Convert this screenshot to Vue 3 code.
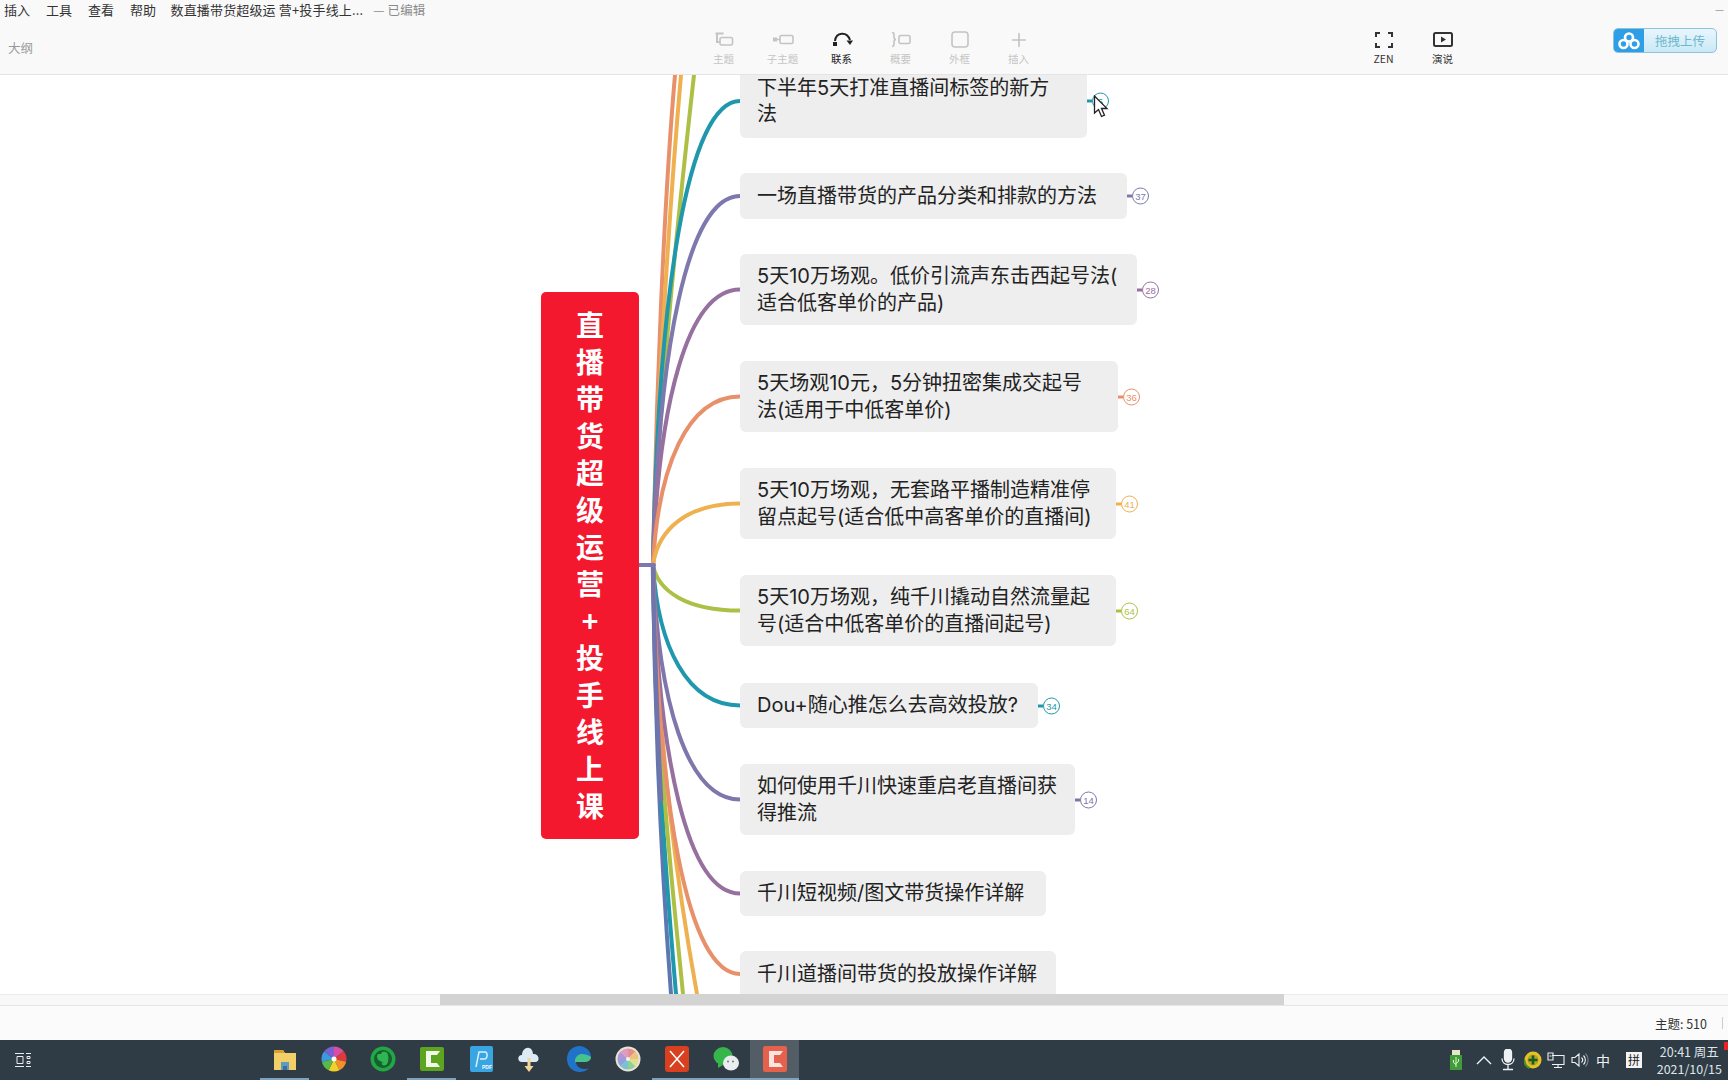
<script setup>
const menus = ['插入', '工具', '查看', '帮助']

const tools = [
  { label: '主题', id: 'topic' },
  { label: '子主题', id: 'sub' },
  { label: '联系', id: 'rel', on: true },
  { label: '概要', id: 'sum' },
  { label: '外框', id: 'box' },
  { label: '插入', id: 'add' },
]

const colors = {
  teal: '#1f97ad',
  blue: '#7d78ae',
  purple: '#96709f',
  coral: '#e8906a',
  yellow: '#efb04f',
  olive: '#aebf45',
  slate: '#7f76ab',
}

const nodes = [
  { lines: ['下半年5天打准直播间标签的新方', '法'], top: 64, w: 347, h: 74, color: colors.teal, badge: '6' },
  { lines: ['一场直播带货的产品分类和排款的方法'], top: 173, w: 387, h: 46, color: colors.blue, badge: '37' },
  { lines: ['5天10万场观。低价引流声东击西起号法(', '适合低客单价的产品)'], top: 254, w: 397, h: 71, color: colors.purple, badge: '28' },
  { lines: ['5天场观10元，5分钟扭密集成交起号', '法(适用于中低客单价)'], top: 361, w: 378, h: 71, color: colors.coral, badge: '36' },
  { lines: ['5天10万场观，无套路平播制造精准停', '留点起号(适合低中高客单价的直播间)'], top: 468, w: 376, h: 71, color: colors.yellow, badge: '41' },
  { lines: ['5天10万场观，纯千川撬动自然流量起', '号(适合中低客单价的直播间起号)'], top: 575, w: 376, h: 71, color: colors.olive, badge: '64' },
  { lines: ['Dou+随心推怎么去高效投放?'], top: 683, w: 298, h: 45, color: colors.teal, badge: '34' },
  { lines: ['如何使用千川快速重启老直播间获', '得推流'], top: 764, w: 335, h: 71, color: colors.slate, badge: '14' },
  { lines: ['千川短视频/图文带货操作详解'], top: 871, w: 306, h: 45, color: colors.purple },
  { lines: ['千川道播间带货的投放操作详解'], top: 951, w: 316, h: 60, color: colors.coral },
]

const NODE_X = 740
const JX = 653
const JY = 565

function curve(n) {
  const y = n.top + (n.top === 951 ? 23 : n.h / 2)
  const up = y < JY
  const d = Math.abs(y - JY)
  const cy1 = JY + (up ? -1 : 1) * d * 0.58
  return `M${JX} ${JY} C ${JX + 5} ${cy1}, ${JX + 34} ${y}, ${NODE_X} ${y}`
}

const branches = nodes.map((n) => ({ d: curve(n), color: n.color }))

const extra = [
  { d: `M${JX} ${JY} C 656 400, 664 200, 675 75`, color: '#e8906a' },
  { d: `M${JX} ${JY} C 657 400, 670 200, 681 75`, color: '#efb04f' },
  { d: `M${JX} ${JY} C 658 400, 680 200, 694 75`, color: '#aebf45' },
  { d: `M${JX} ${JY} C 655 760, 664 900, 671 994`, color: '#5d78b0' },
  { d: `M${JX} ${JY} C 656 760, 668 900, 676 994`, color: '#1f97ad' },
  { d: `M${JX} ${JY} C 657 760, 674 900, 683 994`, color: '#aebf45' },
  { d: `M${JX} ${JY} C 658 760, 680 900, 697 994`, color: '#efb04f' },
]

const rootChars = ['直', '播', '带', '货', '超', '级', '运', '营', '+', '投', '手', '线', '上', '课']

const dock = ['folder', 'pin', 'ever', 'cam', 'pdf', 'cloud', 'edge', 'wheel', 'x', 'wx', 'cam2']
const underlined = new Set(['folder', 'cam', 'x', 'wx', 'cam2'])

function wedges(cx, cy, r, palette) {
  const step = (Math.PI * 2) / palette.length
  return palette.map((fill, i) => {
    const a = i * step - Math.PI / 2
    const b = a + step
    const x0 = (cx + r * Math.cos(a)).toFixed(2)
    const y0 = (cy + r * Math.sin(a)).toFixed(2)
    const x1 = (cx + r * Math.cos(b)).toFixed(2)
    const y1 = (cy + r * Math.sin(b)).toFixed(2)
    return { fill, d: `M${cx} ${cy}L${x0} ${y0}A${r} ${r} 0 0 1 ${x1} ${y1}Z` }
  })
}
const pinWedges = wedges(14, 14, 12.5, ['#d64fa0', '#e0393c', '#f2902a', '#f0d02c', '#58b947', '#3d9ae0', '#7c5fd0'])
const wheelWedges = wedges(14, 14, 10.5, ['#e58f8f', '#ecc27c', '#dfe08c', '#8fcf9a', '#79c3d0', '#8ea3db', '#b394d6', '#e19ac0'])
</script>

<template>
  <div class="app">
    <header class="top">
      <div class="menubar">
        <span v-for="m in menus" :key="m" class="menu">{{ m }}</span>
        <span class="doc">数直播带货超级运 营+投手线上...</span>
        <span class="edited">— 已编辑</span>
        <span class="min">—</span>
      </div>
      <div class="outline">大纲</div>
      <div class="tools">
        <div v-for="t in tools" :key="t.id" class="tool" :class="{ on: t.on }">
          <svg width="24" height="20" viewBox="0 0 24 20" fill="none" stroke="currentColor" stroke-width="1.6">
            <template v-if="t.id === 'topic'">
              <path d="M3.500 3.500h8M5 2.500v9.500h2.500" stroke-width="2" />
              <rect x="8" y="7.500" width="12.500" height="7.500" rx="1.500" />
            </template>
            <template v-else-if="t.id === 'sub'">
              <rect x="2" y="7.500" width="4" height="4" fill="currentColor" stroke="none" />
              <path d="M6 9.500h3" />
              <rect x="9" y="5.500" width="13" height="8" rx="1.500" />
            </template>
            <template v-else-if="t.id === 'rel'">
              <rect x="3" y="12" width="4" height="4" fill="currentColor" stroke="none" />
              <path d="M5 11C6 2 17 1 20 10" stroke-width="2" />
              <path d="M16.500 10.500h6.500L20 15z" fill="currentColor" stroke="none" />
            </template>
            <template v-else-if="t.id === 'sum'">
              <path d="M3 2.500c2 0 2 1 2 2.500v2c0 1.500 1 2.500 2 2.500-1 0-2 1-2 2.500v2c0 1.500 0 2.500-2 2.500" />
              <rect x="10" y="5.500" width="11" height="8" rx="1.500" />
            </template>
            <template v-else-if="t.id === 'box'">
              <rect x="4" y="2" width="16" height="15" rx="3" />
            </template>
            <template v-else>
              <path d="M12 3v14M5 10h14" />
            </template>
          </svg>
          <span class="tool-label">{{ t.label }}</span>
        </div>
      </div>
      <div class="modes">
        <div class="tool mode">
          <svg width="22" height="20" viewBox="0 0 22 20" fill="none" stroke="#333" stroke-width="2">
            <path d="M3 7V3h4M15 3h4v4M19 13v4h-4M7 17H3v-4" />
          </svg>
          <span class="tool-label">ZEN</span>
        </div>
        <div class="tool mode">
          <svg width="24" height="20" viewBox="0 0 24 20" fill="none">
            <rect x="3" y="3" width="18" height="13" rx="1.500" stroke="#333" stroke-width="2" />
            <path d="M10 6.500l5 3-5 3z" fill="#333" />
          </svg>
          <span class="tool-label">演说</span>
        </div>
      </div>
      <div class="upload">
        <span class="up-icon">
          <svg width="24" height="20" viewBox="0 0 24 20" fill="none" stroke="#fff" stroke-width="2.600">
            <circle cx="12" cy="6.500" r="4" />
            <circle cx="6.500" cy="13" r="4" />
            <circle cx="17.500" cy="13" r="4" />
          </svg>
        </span>
        <span class="up-text">拖拽上传</span>
      </div>
    </header>

    <main class="canvas">
      <svg class="links" width="1728" height="1080" viewBox="0 0 1728 1080" fill="none" stroke-linecap="round">
        <path v-for="(b, i) in extra" :key="'e' + i" :d="b.d" :stroke="b.color" stroke-width="4" />
        <path v-for="(b, i) in branches" :key="'b' + i" :d="b.d" :stroke="b.color" stroke-width="4" />
        <path :d="`M${JX} ${JY} C 654 640, 657 720, 661 800`" stroke="#6f74ad" stroke-width="4.500" />
        <path d="M639 565H654" stroke="#7d78ae" stroke-width="4" />
      </svg>

      <div class="root">
        <span v-for="(c, i) in rootChars" :key="i">{{ c }}</span>
      </div>

      <div
        v-for="n in nodes"
        :key="n.lines[0]"
        class="node"
        :class="{ cut: n.top === 951 }"
        :style="{ top: n.top - 75 + 'px', width: n.w + 'px', height: n.h + 'px' }"
      >
        <span v-for="l in n.lines" :key="l" class="line">{{ l }}</span>
        <span v-if="n.badge" class="badge" :style="{ color: n.color }">
          <i class="stub" :style="{ background: n.color }"></i>
          <b class="ring">{{ n.badge }}</b>
        </span>
      </div>

      <svg class="cursor" width="16" height="24" viewBox="0 0 16 24">
        <path d="M1.500 1v17l4-3.500 3 7 3-1.300-3-6.700h5.500z" fill="#fff" stroke="#222" stroke-width="1.300" />
      </svg>
    </main>

    <div class="hscroll"><div class="thumb"></div></div>

    <div class="status">
      <span>主题: 510</span><i class="sep"></i>
    </div>

    <footer class="taskbar">
      <svg class="taskview" width="16" height="16" viewBox="0 0 16 16" fill="none" stroke="#e8edf0" stroke-width="1">
        <path d="M0 1.500h9M0 14.500h9M2 4.500h6v7H2zM11 1.500h5M11 14.500h5M12 4.500h3v2h-3zM12 9.500h3v2h-3z" />
      </svg>
      <div class="dock">
        <div v-for="d in dock" :key="d" class="dock-item" :class="{ u: underlined.has(d), cur: d === 'cam2' }">
          <svg width="28" height="28" viewBox="0 0 28 28">
            <template v-if="d === 'folder'">
              <path d="M3 5h9l2 3h11v17H3z" fill="#f3cf67" />
              <path d="M3 5h9l2 3H3z" fill="#d99f2f" />
              <path d="M10 17h8v8h-8z" fill="#5d9bc4" />
              <path d="M12 21h4v4h-4z" fill="#3d6f92" />
            </template>
            <template v-else-if="d === 'pin'">
              <path v-for="w in pinWedges" :key="w.fill" :d="w.d" :fill="w.fill" />
              <circle cx="14" cy="14" r="2.500" fill="#fff" />
            </template>
            <template v-else-if="d === 'ever'">
              <circle cx="14" cy="14" r="12.500" fill="#24a646" />
              <circle cx="14" cy="14" r="9" fill="#14602f" />
              <path d="M9 9h3l1-2c3-1 6 0 6 3 1 4 0 9-2 10-3 1-5 0-4-3l1 1c1 1 1-1-1-1-2-1-5-2-5-6z" fill="#2fb653" />
            </template>
            <template v-else-if="d === 'cam'">
              <rect x="2" y="2" width="24" height="24" rx="2" fill="#5ea51f" />
              <path d="M22 6H8v16h14l-3-4h-6v-8h6z" fill="#f2f8ea" />
            </template>
            <template v-else-if="d === 'pdf'">
              <rect x="3" y="1" width="23" height="26" rx="2" fill="#39a5e2" />
              <path d="M9 22l3-15h6c3 0 3 7-1 7h-4" fill="none" stroke="#d9f1ff" stroke-width="1.500" />
              <text x="15" y="24" class="pdf-t">PDF</text>
            </template>
            <template v-else-if="d === 'cloud'">
              <path d="M6 17c-5 0-5-7 0-7 0-5 4-8 7-7 2 0 4 3 4 6 6-1 8 8 2 8z" fill="#dcebf6" />
              <path d="M11.500 13h3v8h3L13 27l-4.500-6h3z" fill="#f1d79a" />
            </template>
            <template v-else-if="d === 'edge'">
              <path d="M2 14C2 6 8 1 14 1c7 0 12 5 12 11 0 4-4 5-7 5H11c0 4 4 7 8 7 2 0 3 0 5-1-3 3-6 4-9 4C7 27 2 21 2 14z" fill="#2173c9" />
              <path d="M10 15c1-5 5-6 7-6 5 0 9 3 9 3 0 4-4 5-7 5h-9z" fill="#48c28d" />
            </template>
            <template v-else-if="d === 'wheel'">
              <circle cx="14" cy="14" r="12.500" fill="#e9e2d6" />
              <path v-for="w in wheelWedges" :key="w.fill" :d="w.d" :fill="w.fill" />
              <circle cx="14" cy="14" r="2" fill="#f4f1ea" />
            </template>
            <template v-else-if="d === 'x'">
              <rect x="2" y="1" width="24" height="26" rx="3" fill="#d9401f" />
              <path d="M7 6l14 16M21 6L7 22" stroke="#fff" stroke-width="1.500" />
            </template>
            <template v-else-if="d === 'wx'">
              <ellipse cx="11" cy="11" rx="9.500" ry="9" fill="#36b54a" />
              <path d="M6 18l0 5 5-3z" fill="#36b54a" />
              <ellipse cx="19" cy="18" rx="8" ry="7.500" fill="#e9edef" />
              <circle cx="16" cy="16.500" r="1" fill="#777" />
              <circle cx="21" cy="16.500" r="1" fill="#777" />
            </template>
            <template v-else>
              <rect x="2" y="1" width="24" height="26" rx="2" fill="#e5604d" />
              <path d="M22 6H8v16h14l-3-4h-6v-8h6z" fill="#fbe4dc" />
            </template>
          </svg>
        </div>
      </div>
      <div class="tray">
        <svg class="t-usb" width="14" height="22" viewBox="0 0 14 22">
          <rect x="3" y="1" width="8" height="5" fill="#e8e4c6" />
          <rect x="1" y="6" width="12" height="15" fill="#3f9c38" />
          <path d="M7 8v10M4.500 11v2.500L7 15.500M9.500 10v2.500L7 14.500" stroke="#e8f5d8" fill="none" />
        </svg>
        <svg class="t-chev" width="16" height="10" viewBox="0 0 16 10" fill="none" stroke="#eef2f4" stroke-width="1.400">
          <path d="M1 9l7-7 7 7" />
        </svg>
        <svg class="t-mic" width="14" height="22" viewBox="0 0 14 22" fill="none" stroke="#eef2f4" stroke-width="1.300">
          <rect x="3.500" y="0" width="7" height="13" rx="3.500" fill="#eef2f4" />
          <path d="M1 9.500c0 8 12 8 12 0M7 16v4M2 20.500h10" />
        </svg>
        <svg class="t-yel" width="18" height="18" viewBox="0 0 18 18">
          <circle cx="9" cy="9" r="8.500" fill="#e6c324" />
          <path d="M0.500 9a8.500 8.500 0 0 0 5 8" stroke="#4a8f2e" stroke-width="2" fill="none" />
          <circle cx="9" cy="9" r="5.500" fill="#2f3b45" opacity=".25" />
          <path d="M9 4.500v9M4.500 9h9" stroke="#175d1c" stroke-width="2.600" />
        </svg>
        <svg class="t-net" width="18" height="16" viewBox="0 0 18 16" fill="none" stroke="#eef2f4" stroke-width="1.100">
          <path d="M5 3.500h12v9H5M1 1h5v7H1zM2.500 4h2M11 12.500v3M7 15.500h8" />
        </svg>
        <svg class="t-spk" width="18" height="16" viewBox="0 0 18 16" fill="none" stroke="#eef2f4" stroke-width="1.100">
          <path d="M1 5.500h3L8 2v12l-4-3.500H1zM10.500 5.500c1.500 1.500 1.500 3.500 0 5M12.500 3.500c2.500 2.500 2.500 6.500 0 9" />
          <path d="M14.500 1.500c3.500 3.500 3.500 9.500 0 13" stroke="#79838b" />
        </svg>
        <span class="zh">中</span>
        <span class="pin">拼</span>
        <div class="clock">
          <span>20:41 周五</span>
          <span>2021/10/15</span>
        </div>
        <i class="dot"></i>
      </div>
    </footer>
  </div>
</template>

<style>
html, body { margin: 0; padding: 0; background: #fff; }
</style>

<style scoped>
.app {
  width: 1728px;
  height: 1080px;
  display: flex;
  flex-direction: column;
  overflow: hidden;
  position: relative;
  font-family: "Noto Sans CJK SC", "Liberation Sans", sans-serif;
  color: #222;
}

.top {
  flex: 0 0 75px;
  box-sizing: border-box;
  background: #f9f9f9;
  border-bottom: 1px solid #e4e4e4;
  position: relative;
}
.menubar {
  display: flex;
  align-items: center;
  height: 19px;
  padding-left: 4px;
  font-size: 13px;
  color: #333;
}
.menu { margin-right: 16px; }
.doc { margin-left: -1.500px; color: #333; letter-spacing: 0.15px; }
.edited { margin-left: 10px; color: #8b8b8b; font-size: 12.500px; letter-spacing: 0.15px; }
.min { position: absolute; right: 4px; top: 1px; color: #999; font-size: 10px; }
.outline { position: absolute; left: 8px; top: 39px; font-size: 12.500px; color: #999; line-height: 18px; }

.tools {
  position: absolute;
  left: 694px;
  top: 30px;
  display: flex;
}
.tool {
  width: 59px;
  display: flex;
  flex-direction: column;
  align-items: center;
  color: #c4c4c4;
}
.tool.on { color: #222; }
.tool-label { font-size: 10.500px; line-height: 14px; margin-top: 2px; white-space: nowrap; }

.modes {
  position: absolute;
  left: 1354px;
  top: 30px;
  display: flex;
}
.mode { color: #333; }

.upload {
  position: absolute;
  left: 1613px;
  top: 28px;
  width: 104px;
  height: 25px;
  box-sizing: border-box;
  border-radius: 5px;
  border: 1px solid #8fc2d9;
  background: linear-gradient(#e9f6fc, #c9e9f6);
  display: flex;
  overflow: hidden;
}
.up-icon {
  flex: 0 0 30px;
  background: #2e9fe6;
  display: flex;
  align-items: center;
  justify-content: center;
}
.up-text {
  flex: 1;
  text-align: center;
  font-size: 12.500px;
  line-height: 23px;
  color: #6fb7cf;
}

.canvas {
  flex: 0 0 919px;
  position: relative;
  overflow: hidden;
  background: #fff;
}
.links { position: absolute; left: 0; top: -75px; }

.root {
  position: absolute;
  left: 541px;
  top: 217px;
  width: 98px;
  height: 547px;
  box-sizing: border-box;
  padding-top: 14px;
  background: #f4182f;
  border-radius: 5px;
  display: flex;
  flex-direction: column;
  align-items: center;
  color: #fff;
  font-size: 28px;
  font-weight: 700;
  line-height: 37px;
}

.node {
  position: absolute;
  left: 740px;
  box-sizing: border-box;
  background: #eeeeee;
  border-radius: 6px;
  padding: 0 17px;
  display: flex;
  flex-direction: column;
  justify-content: center;
  font-family: "Inter", "Noto Sans CJK SC", sans-serif;
  font-size: 20px;
  line-height: 26.500px;
  color: #222;
  white-space: nowrap;
}
.node.cut { justify-content: flex-start; padding-top: 10px; }
.line { display: block; }
.badge {
  position: absolute;
  left: 100%;
  top: 50%;
  transform: translateY(-50%);
  display: flex;
  align-items: center;
}
.stub { width: 5px; height: 3px; display: block; }
.ring {
  box-sizing: border-box;
  width: 17px;
  height: 17px;
  border: 1px solid currentColor;
  border-radius: 50%;
  background: #fff;
  font-weight: 400;
  font-style: normal;
  font-size: 9.500px;
  line-height: 15px;
  text-align: center;
  font-family: "Liberation Sans", sans-serif;
}
.cursor { position: absolute; left: 1093px; top: 20px; }

.hscroll {
  flex: 0 0 11px;
  background: #f8f8f8;
  border-top: 1px solid #ececec;
  box-sizing: border-box;
  position: relative;
}
.thumb {
  position: absolute;
  left: 440px;
  top: -1px;
  width: 844px;
  height: 11px;
  background: #d3d3d3;
}

.status {
  flex: 0 0 35px;
  box-sizing: border-box;
  border-top: 1px solid #e6e6e6;
  background: #fbfbfb;
  display: flex;
  align-items: center;
  justify-content: flex-end;
  font-size: 12.500px;
  color: #333;
}
.sep { width: 1px; height: 12px; background: #ccc; margin: 0 5px 0 15px; }

.taskbar {
  flex: 0 0 40px;
  background: #2f3b45;
  position: relative;
}
.taskview { position: absolute; left: 15px; top: 12px; }
.dock {
  position: absolute;
  left: 260px;
  top: 0;
  display: flex;
}
.dock-item {
  box-sizing: border-box;
  width: 49px;
  height: 40px;
  display: flex;
  align-items: center;
  justify-content: center;
  border-bottom: 2px solid transparent;
}
.dock-item.u { border-bottom-color: #7ea3c1; }
.dock-item.cur { background: #525d66; }
.pdf-t { font: 700 5px "Liberation Sans", sans-serif; fill: #fff; }

.tray {
  position: absolute;
  left: 1449px;
  top: 0;
  height: 40px;
  width: 279px;
  display: flex;
  align-items: center;
  color: #eef2f4;
}
.t-chev { margin-left: 13px; }
.t-mic { margin-left: 9px; }
.t-yel { margin-left: 9px; }
.t-net { margin-left: 5px; }
.t-spk { margin-left: 6px; }
.zh { font-size: 14px; margin-left: 7px; line-height: 20px; }
.pin {
  box-sizing: border-box;
  width: 16px;
  height: 16px;
  font-size: 12px;
  line-height: 16px;
  background: #f4f4f4;
  color: #222;
  text-align: center;
  margin-left: 16px;
}
.clock {
  display: flex;
  flex-direction: column;
  align-items: center;
  font-size: 12.500px;
  line-height: 17px;
  margin-left: auto;
  margin-right: 6px;
  color: #dfe5e9;
}
.dot { position: absolute; right: 0; top: 2px; width: 4px; height: 8px; background: #e22; }
</style>
